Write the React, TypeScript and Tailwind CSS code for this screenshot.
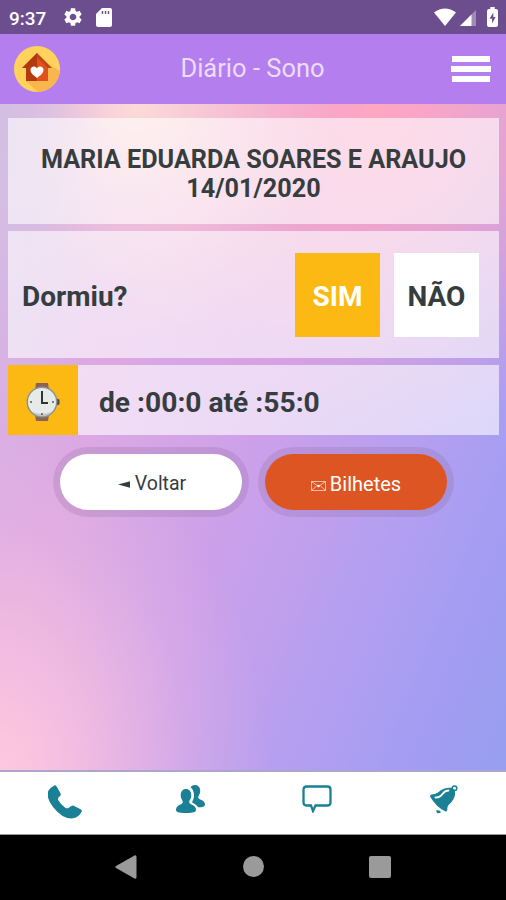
import React from 'react';

interface PanelProps {
  className?: string;
  children: React.ReactNode;
}

const Panel: React.FC<PanelProps> = ({ className = '', children }) => (
  <section className={`bg-white/60 ${className}`}>{children}</section>
);

const StatusBar: React.FC = () => (
  <div className="flex h-[34px] shrink-0 items-center bg-[#6c4d8e] pl-[9px] pr-[8px] text-white">
    <span className="w-[53px] pt-0.5 text-[19px] font-medium leading-none">9:37</span>
    <svg className="h-[22px] w-[22px]" viewBox="0 0 24 24" fill="currentColor">
      <path d="M19.14 12.94c.04-.3.06-.61.06-.94 0-.32-.02-.64-.07-.94l2.03-1.58c.18-.14.23-.41.12-.61l-1.92-3.32c-.12-.22-.37-.29-.59-.22l-2.39.96c-.5-.38-1.03-.7-1.62-.94l-.36-2.54c-.04-.24-.24-.41-.48-.41h-3.84c-.24 0-.43.17-.47.41l-.36 2.54c-.59.24-1.13.57-1.62.94l-2.39-.96c-.22-.08-.47 0-.59.22L2.74 8.87c-.12.21-.08.47.12.61l2.03 1.58c-.05.3-.09.63-.09.94s.02.64.07.94l-2.03 1.58c-.18.14-.23.41-.12.61l1.92 3.32c.12.22.37.29.59.22l2.39-.96c.5.38 1.03.7 1.62.94l.36 2.54c.05.24.24.41.48.41h3.84c.24 0 .44-.17.47-.41l.36-2.54c.59-.24 1.13-.56 1.62-.94l2.39.96c.22.08.47 0 .59-.22l1.92-3.32c.12-.22.07-.47-.12-.61l-2.01-1.58zM12 15.6c-1.98 0-3.6-1.62-3.6-3.6s1.62-3.6 3.6-3.6 3.6 1.62 3.6 3.6-1.62 3.6-3.6 3.6z" />
    </svg>
    <svg className="ml-3 h-[19px] w-4" viewBox="0 0 16 19">
      <path d="M6 0h8q2 0 2 2v15q0 2-2 2H2q-2 0-2-2V6z" fill="#fff" />
      <path d="M6.500 3v3M9.500 3v3M12.500 3v3" stroke="#6c4d8e" strokeWidth="1.400" />
    </svg>
    <svg className="ml-auto h-[18px] w-[22px]" viewBox="0 0 22 18" fill="currentColor">
      <path d="M0 4.500Q11-3.500 22 4.500L11 18z" />
    </svg>
    <svg className="ml-1 mt-0.5 h-4 w-4" viewBox="0 0 16 16" fill="currentColor">
      <path d="M16 0v16H0z" opacity=".35" />
      <path d="M11.500 4.500V16H0z" />
    </svg>
    <svg className="ml-[11px] h-5 w-[11px]" viewBox="0 0 11 20">
      <path d="M3.300 0h4.400v2H9q2 0 2 2v14q0 2-2 2H2q-2 0-2-2V4q0-2 2-2h1.300z" fill="#fff" />
      <path d="M6.300 5.500 2.500 11.800h2.600v4.700l3.500-6.400H6.300z" fill="#6c4d8e" />
    </svg>
  </div>
);

const HomeLogo: React.FC = () => (
  <svg className="h-[46px] w-[46px]" viewBox="0 0 46 46">
    <circle cx="23" cy="23" r="23" fill="#ffd25c" />
    <path d="M37 20 45.900 25A23 23 0 0 1 24 46L12 35z" fill="#f8b64c" />
    <path d="M23 7 8 22h4v13h11z" fill="#b53a0c" />
    <path d="M23 7 38 22h-4v13H23z" fill="#e0511b" />
    <path d="M23 7 8 22h4L23 11.500 34 22h4z" fill="#a83b14" opacity=".55" />
    <path d="M23 32C19 29 16.500 27 16.500 23.800 16.500 20.300 21 19 23 22.300 25 19 29.500 20.300 29.500 23.800 29.500 27 27 29 23 32z" fill="#fff" />
  </svg>
);

const Header: React.FC = () => (
  <header className="flex h-[70px] shrink-0 items-center bg-[#b57eee] pl-[14px] pr-[15px]">
    <HomeLogo />
    <h1 className="flex-1 pr-[6px] text-center text-[25.500px] leading-none text-[#ebdcfb]">Diário - Sono</h1>
    <button aria-label="Menu" className="flex w-10 flex-col items-center gap-1">
      <span className="h-[6px] w-[38px] bg-white" />
      <span className="h-[6px] w-10 bg-white" />
      <span className="h-[6px] w-[38px] bg-white" />
    </button>
  </header>
);

const WatchIcon: React.FC = () => (
  <svg className="h-[38px] w-[34px]" viewBox="0 0 34 38">
    <path d="M10 0h12l1 7H9zM9 31h14l-1 7H10z" fill="#8d6058" />
    <path d="m31 15.500 2.500 1.200v4.600L31 22.500z" fill="#454545" />
    <circle cx="16" cy="19" r="15.500" fill="#89948f" />
    <circle cx="16" cy="19" r="14" fill="#e6eae9" />
    <path d="M6 29A14 14 0 0 0 26 29Q16 33 6 29z" fill="#bfc5c4" />
    <path d="M16 8v12h6" fill="none" stroke="#333" strokeWidth="2" />
    <path d="M4 19h2M26 19h2M16 30v2" stroke="#555" strokeWidth="1.500" />
  </svg>
);

const TabBar: React.FC = () => (
  <nav className="grid h-16 shrink-0 grid-cols-4 border-t-2 border-[#aaa6cc] bg-white pl-0.5 pt-[13px] text-[#1a8095]">
    <button aria-label="Telefone" className="flex items-start justify-center">
      <svg className="h-[35px] w-[34px]" viewBox="0 0 34 35" fill="currentColor">
        <path d="M5.500 1Q7.300-.5 8.500 1.300l4 7q.8 1.700-.7 2.900-2.500 1.600-1.600 3.800 2.500 4.600 7.300 8 2 .9 3.700-.5 3.200-2.800 5-1.600l6.800 3.500q1.500 1 .5 2.700-4 6.500-10 6.500Q14 33.500 5 22-2.500 12 .5 5.500 2 2.800 5.500 1z" />
      </svg>
    </button>
    <button aria-label="Contatos" className="flex items-start justify-center">
      <svg className="mr-0.5 h-[29px] w-[29px]" viewBox="0 0 29 29" fill="currentColor">
        <path d="M10 4c-3.300 0-5.300 2.700-5.300 6.200 0 3 1.300 4.300 2 6 .3 1.500-.2 2.300-2.200 3.200C1.500 20.800 0 22 0 24.700 0 27 2 28 10 28s10-1 10-3.300c0-2.700-1.500-3.900-4.500-5.300-2-.9-2.500-1.700-2.200-3.200.7-1.700 2-3 2-6C15.300 6.700 13.300 4 10 4z" />
        <path d="M14.500 2.200C15.800.800 17.300 0 19 0c3.200 0 5.200 2.500 5.200 5.900 0 2.800-1.300 4-1.900 5.600-.3 1.400.2 2.200 2.100 3 3 1.300 4.600 2.700 4.600 5 0 2-2 2.800-7 2.800-1-1.800-2.500-3-4.900-4.200-1-.6-1-1-.8-1.600 1.200-2.200 1.800-4 1.700-6.500-.1-3.400-1.200-6-3.500-7.800z" />
      </svg>
    </button>
    <button aria-label="Mensagens" className="flex items-start justify-center">
      <svg className="h-[28px] w-[30px]" viewBox="0 0 30 28" fill="none" stroke="currentColor" strokeWidth="2.300">
        <path d="M4.500 1.500h21q3 0 3 3v13q0 3-3 3h-12L11 26l-2-5.500H4.500q-3 0-3-3v-13q0-3 3-3z" />
      </svg>
    </button>
    <button aria-label="Avisos" className="flex items-start justify-center">
      <svg className="ml-0.5 h-[29px] w-[28px]" viewBox="0 0 28 29" fill="currentColor">
        <path d="M22.500 3C17 2 12 3.500 8 7.500Q5 9.500 1.500 9.500-.2 10 .2 11.800 6 22 15.500 26.500q1.700.4 1.800-1.700-.2-3 1-4.600C23 16 26.500 11 24.500 5z" />
        <circle cx="24.500" cy="3.200" r="2.300" fill="none" stroke="currentColor" strokeWidth="1.500" />
        <path d="M5.500 12.500Q10 12.500 12.500 9t6-3.500" fill="none" stroke="#fff" strokeWidth="1.800" strokeLinecap="round" />
        <path d="M6 25.500q4-.8 5 1.800Q7 30 6 25.500z" />
      </svg>
    </button>
  </nav>
);

const SystemNav: React.FC = () => (
  <div className="flex h-[66px] shrink-0 items-center justify-between border-t border-[#999] bg-black px-[115px] pb-0.5 text-[#9a9a9a]">
    <svg className="h-6 w-[22px]" viewBox="0 0 22 24" fill="currentColor">
      <path d="M19.500.5Q21.500-.3 21.500 2v20q0 2.300-2 1.500L1 13q-1.300-1 0-2z" />
    </svg>
    <span className="h-[21px] w-[21px] rounded-full bg-current" />
    <span className="h-[22px] w-[22px] rounded-[2px] bg-current" />
  </div>
);

export default function App() {
  return (
    <div className="flex h-[900px] w-[506px] flex-col overflow-hidden bg-black font-[Roboto,sans-serif] text-[#363d3e]">
      <StatusBar />
      <Header />

      <main className="flex-1 bg-[radial-gradient(ellipse_110px_420px_at_0%_0%,#d2bfe3_0%,#d2bfe3a0_40%,#d2bfe330_75%,#d2bfe300_100%),radial-gradient(ellipse_200px_230px_at_27%_0%,#fddad8_0%,#fddad890_40%,#fddad830_75%,#fddad800_100%),radial-gradient(ellipse_330px_330px_at_74%_0%,#ffa6c2_0%,#ffa6c2a0_42%,#ffa6c238_75%,#ffa6c200_100%),radial-gradient(ellipse_270px_340px_at_0%_100%,#ffc8df_0%,#ffc8dfa0_35%,#ffc8df30_72%,#ffc8df00_100%),linear-gradient(112deg,#dcaee3_0%,#dba8e3_30%,#cba0ea_52%,#b49ff0_72%,#a49df3_86%,#989eef_100%)] px-[7px] pt-[14px]">
        <div className="flex flex-col gap-[7px] pl-px">
          <Panel className="flex h-[106px] flex-col items-center justify-center pt-1.5 text-[25.200px] font-bold leading-[29px]">
            <h2>MARIA EDUARDA SOARES E ARAUJO</h2>
            <p>14/01/2020</p>
          </Panel>

          <Panel className="flex h-[127px] items-center pl-[14px] pr-[20px] text-[28px] font-bold">
            <p className="flex-1 pt-1">Dormiu?</p>
            <button className="h-[84px] w-[85px] bg-[#fdb913] pt-1 text-white">SIM</button>
            <button className="ml-[14px] h-[84px] w-[85px] bg-white pt-1">NÃO</button>
          </Panel>

          <Panel className="flex h-[70px] items-center text-[28.200px] font-bold">
            <div className="flex h-full w-[70px] items-center justify-center bg-[#fdb913] pt-1">
              <WatchIcon />
            </div>
            <p className="ml-[21px] pt-1.5">de :00:0 até :55:0</p>
          </Panel>
        </div>

        <div className="mt-[12px] flex gap-[9px] pl-[46px] text-[20px]">
          <button className="flex h-[70px] w-[196px] items-center justify-center gap-[5px] rounded-full border-[7px] border-[#80609033] bg-white bg-clip-padding pl-0.5 pt-1 text-[19.500px]">
            <svg className="h-[7px] w-3" viewBox="0 0 12 7" fill="currentColor">
              <path d="m0 3.500 12-3.300v6.600z" />
            </svg>
            Voltar
          </button>
          <button className="flex h-[70px] w-[196px] items-center justify-center gap-1 rounded-full border-[7px] border-[#80609033] bg-[#dc5522] bg-clip-padding pt-1 text-white">
            <svg className="mt-1 h-[10px] w-[15px]" viewBox="0 0 15 10" fill="none" stroke="#ffc9b3" strokeWidth=".9">
              <path d="M.5.5h14v9H.5zM.5.5l7 5 7-5M.5 9.500l5-4.500M14.500 9.500 9.500 5" />
              <circle cx="7.500" cy="5" r="1.300" fill="#fff" stroke="none" />
            </svg>
            Bilhetes
          </button>
        </div>
      </main>

      <TabBar />
      <SystemNav />
    </div>
  );
}
